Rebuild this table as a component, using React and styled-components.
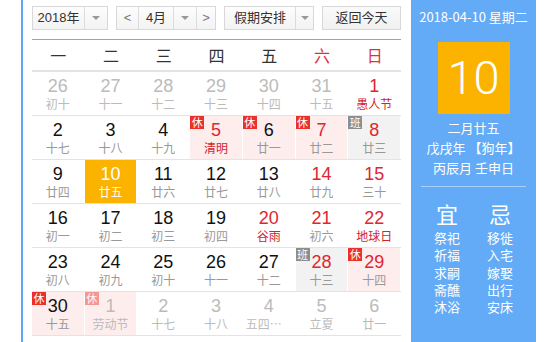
import React from "react";
import styled, { createGlobalStyle } from "styled-components";

const GlobalStyle = createGlobalStyle`
  body {
    margin: 0;
    background: #fff;
    font-family: "Liberation Sans", "Noto Sans CJK SC", sans-serif;
  }
`;

/* Layout */

const Page = styled.div`
  padding-left: 21px;
  width: 550px;
  height: 342px;
  box-sizing: border-box;
  overflow: hidden;
`;

const Widget = styled.div`
  display: flex;
  width: 515px;
  height: 342px;
  border-left: 2px solid #5ea8f3;
  box-sizing: border-box;
`;

const Main = styled.div`
  width: 369px;
  margin: 0 10px 0 9px;
`;

/* Toolbar */

const Toolbar = styled.div`
  display: flex;
  align-items: flex-start;
  gap: 8px;
  height: 40px;
  padding-top: 6px;
  box-sizing: border-box;
  border-bottom: 1px solid #6aaef5;
`;

const SelectBox = styled.div`
  display: flex;
  height: 24px;
  width: ${(p) => p.$width}px;
  box-sizing: border-box;
  border: 1px solid #d8d8d8;
  background: linear-gradient(#fdfdfd, #f3f3f3);
  color: #333;
  font-size: 13px;
`;

const SelectPart = styled.div`
  display: flex;
  align-items: center;
  justify-content: center;
  width: ${(p) => (p.$width ? `${p.$width}px` : "auto")};
  flex: ${(p) => (p.$width ? "none" : 1)};
  border-left: ${(p) => (p.$divider ? "1px solid #dcdcdc" : "none")};
  line-height: 22px;
  color: ${(p) => (p.$muted ? "#777" : "#333")};
`;

const Caret = styled.span`
  width: 0;
  height: 0;
  border-left: 4px solid transparent;
  border-right: 4px solid transparent;
  border-top: 4px solid #999;
`;

const TodayButton = styled.div`
  margin-left: auto;
  width: 79px;
  height: 24px;
  box-sizing: border-box;
  border: 1px solid #d8d8d8;
  background: linear-gradient(#fafafa, #f1f1f1);
  font-size: 13px;
  color: #333;
  line-height: 22px;
  text-align: center;
`;

/* Grid */

const WeekHead = styled.div`
  display: grid;
  grid-template-columns: repeat(7, 1fr);
  height: 32px;
  border-bottom: 2px solid #e3e3e3;
  box-sizing: border-box;
`;

const WeekName = styled.div`
  text-align: center;
  line-height: 31px;
  font-size: 16px;
  font-family: "Noto Sans CJK SC", sans-serif;
  color: ${(p) => (p.$weekend ? "#e0313a" : "#333")};
`;

const Row = styled.div`
  display: grid;
  grid-template-columns: repeat(7, 1fr);
  height: 44px;
  border-bottom: 1px solid #e3e3e3;
  box-sizing: border-box;
`;

const cellBg = (p) => {
  if (p.$today) return "#fbb300";
  if (p.$mark === "rest") return "#fdeded";
  if (p.$mark === "work") return "#f2f2f2";
  return "transparent";
};

const Cell = styled.div`
  position: relative;
  display: flex;
  flex-direction: column;
  align-items: center;
  padding-top: 5px;
  box-sizing: border-box;
  min-width: 0;
  border-right: 1px solid #fff;
  background: ${cellBg};
`;

const DayNum = styled.div`
  font-size: 18px;
  line-height: 19px;
  color: ${(p) => p.$color};
`;

const Lunar = styled.div`
  font-family: "Noto Sans CJK SC", sans-serif;
  font-size: 12px;
  line-height: 16px;
  max-width: 46px;
  white-space: nowrap;
  overflow: hidden;
  text-overflow: ellipsis;
  color: ${(p) => p.$color};
`;

const Badge = styled.span`
  position: absolute;
  top: 0;
  left: 0;
  width: 14px;
  height: 13px;
  font-family: "Noto Sans CJK SC", sans-serif;
  font-size: 11px;
  line-height: 13px;
  text-align: center;
  color: #fff;
  background: ${(p) => (p.$type === "rest" ? "#e9302b" : "#8d8d8d")};
  opacity: ${(p) => (p.$faded ? 0.45 : 1)};
`;

/* Side panel */

const Side = styled.div`
  width: 125px;
  background: #63abf6;
  color: #fff;
  font-family: "Noto Sans CJK SC", sans-serif;
  display: flex;
  flex-direction: column;
  align-items: center;
`;

const SideDate = styled.div`
  margin-top: 8px;
  font-size: 13px;
  line-height: 18px;
`;

const BigDay = styled.div`
  margin-top: 16px;
  width: 72px;
  height: 72px;
  background: #fbb300;
  font-family: Roboto, "Liberation Sans", sans-serif;
  font-weight: 300;
  font-size: 47px;
  line-height: 72px;
  text-align: center;
`;

const LunarInfo = styled.div`
  margin-top: 4px;
  font-size: 13px;
  line-height: 20px;
  text-align: center;
`;

const Divider = styled.div`
  width: 105px;
  height: 1px;
  margin-top: 8px;
  background: #a9d0fa;
`;

const Advice = styled.div`
  display: flex;
  gap: 27px;
  margin-top: 10px;
`;

const AdviceCol = styled.div`
  display: flex;
  flex-direction: column;
  align-items: center;
`;

const AdviceTitle = styled.div`
  font-size: 22px;
  line-height: 32px;
`;

const AdviceItem = styled.div`
  font-size: 13px;
  line-height: 17.3px;
`;

/* Data */

const weekNames = ["一", "二", "三", "四", "五", "六", "日"];

// [day, lunar, flag, mark]  flag o: other month, t: today, r: red label
const weeks = [
  [[26, "初十", "o"], [27, "十一", "o"], [28, "十二", "o"], [29, "十三", "o"], [30, "十四", "o"], [31, "十五", "o"], [1, "愚人节", "r"]],
  [[2, "十七"], [3, "十八"], [4, "十九"], [5, "清明", "r", "rest"], [6, "廿一", "", "rest"], [7, "廿二", "", "rest"], [8, "廿三", "", "work"]],
  [[9, "廿四"], [10, "廿五", "t"], [11, "廿六"], [12, "廿七"], [13, "廿八"], [14, "廿九"], [15, "三十"]],
  [[16, "初一"], [17, "初二"], [18, "初三"], [19, "初四"], [20, "谷雨", "r"], [21, "初六"], [22, "地球日", "r"]],
  [[23, "初八"], [24, "初九"], [25, "初十"], [26, "十一"], [27, "十二"], [28, "十三", "", "work"], [29, "十四", "", "rest"]],
  [[30, "十五", "", "rest"], [1, "劳动节", "o", "rest"], [2, "十七", "o"], [3, "十八", "o"], [4, "五四青年节", "o"], [5, "立夏", "o"], [6, "廿一", "o"]],
];

const good = ["祭祀", "祈福", "求嗣", "斋醮", "沐浴"];
const bad = ["移徙", "入宅", "嫁娶", "出行", "安床"];

const DayCell = ({ day, lunar, flag = "", mark, col }) => {
  const other = flag === "o";
  const today = flag === "t";
  const weekend = col >= 5;

  let numColor = "#111";
  if (today) numColor = "#fff";
  else if (other) numColor = "#bbb";
  else if (weekend || flag === "r") numColor = "#e0262f";

  let lunarColor = "#999";
  if (today) lunarColor = "#fff";
  else if (other) lunarColor = "#bbb";
  else if (flag === "r") lunarColor = "#d5232b";

  return (
    <Cell $today={today} $mark={mark}>
      {mark && (
        <Badge $type={mark} $faded={other}>
          {mark === "rest" ? "休" : "班"}
        </Badge>
      )}
      <DayNum $color={numColor}>{day}</DayNum>
      <Lunar $color={lunarColor}>{lunar}</Lunar>
    </Cell>
  );
};

const App = () => {
  return (
    <>
      <GlobalStyle />
      <Page>
        <Widget>
          <Main>
            <Toolbar>
              <SelectBox $width={76}>
                <SelectPart>2018年</SelectPart>
                <SelectPart $width={22} $divider>
                  <Caret />
                </SelectPart>
              </SelectBox>
              <SelectBox $width={100}>
                <SelectPart $width={21} $muted>&lt;</SelectPart>
                <SelectPart $width={34} $divider>4月</SelectPart>
                <SelectPart $width={22} $divider>
                  <Caret />
                </SelectPart>
                <SelectPart $divider $muted>&gt;</SelectPart>
              </SelectBox>
              <SelectBox $width={90}>
                <SelectPart>假期安排</SelectPart>
                <SelectPart $width={17} $divider>
                  <Caret />
                </SelectPart>
              </SelectBox>
              <TodayButton>返回今天</TodayButton>
            </Toolbar>

            <WeekHead>
              {weekNames.map((n, i) => (
                <WeekName key={n} $weekend={i >= 5}>
                  {n}
                </WeekName>
              ))}
            </WeekHead>

            {weeks.map((week, r) => (
              <Row key={r}>
                {week.map(([day, lunar, flag, mark], c) => (
                  <DayCell key={c} day={day} lunar={lunar} flag={flag} mark={mark} col={c} />
                ))}
              </Row>
            ))}
          </Main>

          <Side>
            <SideDate>2018-04-10 星期二</SideDate>
            <BigDay>10</BigDay>
            <LunarInfo>
              <div>二月廿五</div>
              <div>戊戌年 【狗年】</div>
              <div>丙辰月 壬申日</div>
            </LunarInfo>
            <Divider />
            <Advice>
              <AdviceCol>
                <AdviceTitle>宜</AdviceTitle>
                {good.map((t) => (
                  <AdviceItem key={t}>{t}</AdviceItem>
                ))}
              </AdviceCol>
              <AdviceCol>
                <AdviceTitle>忌</AdviceTitle>
                {bad.map((t) => (
                  <AdviceItem key={t}>{t}</AdviceItem>
                ))}
              </AdviceCol>
            </Advice>
          </Side>
        </Widget>
      </Page>
    </>
  );
};

export default App;
